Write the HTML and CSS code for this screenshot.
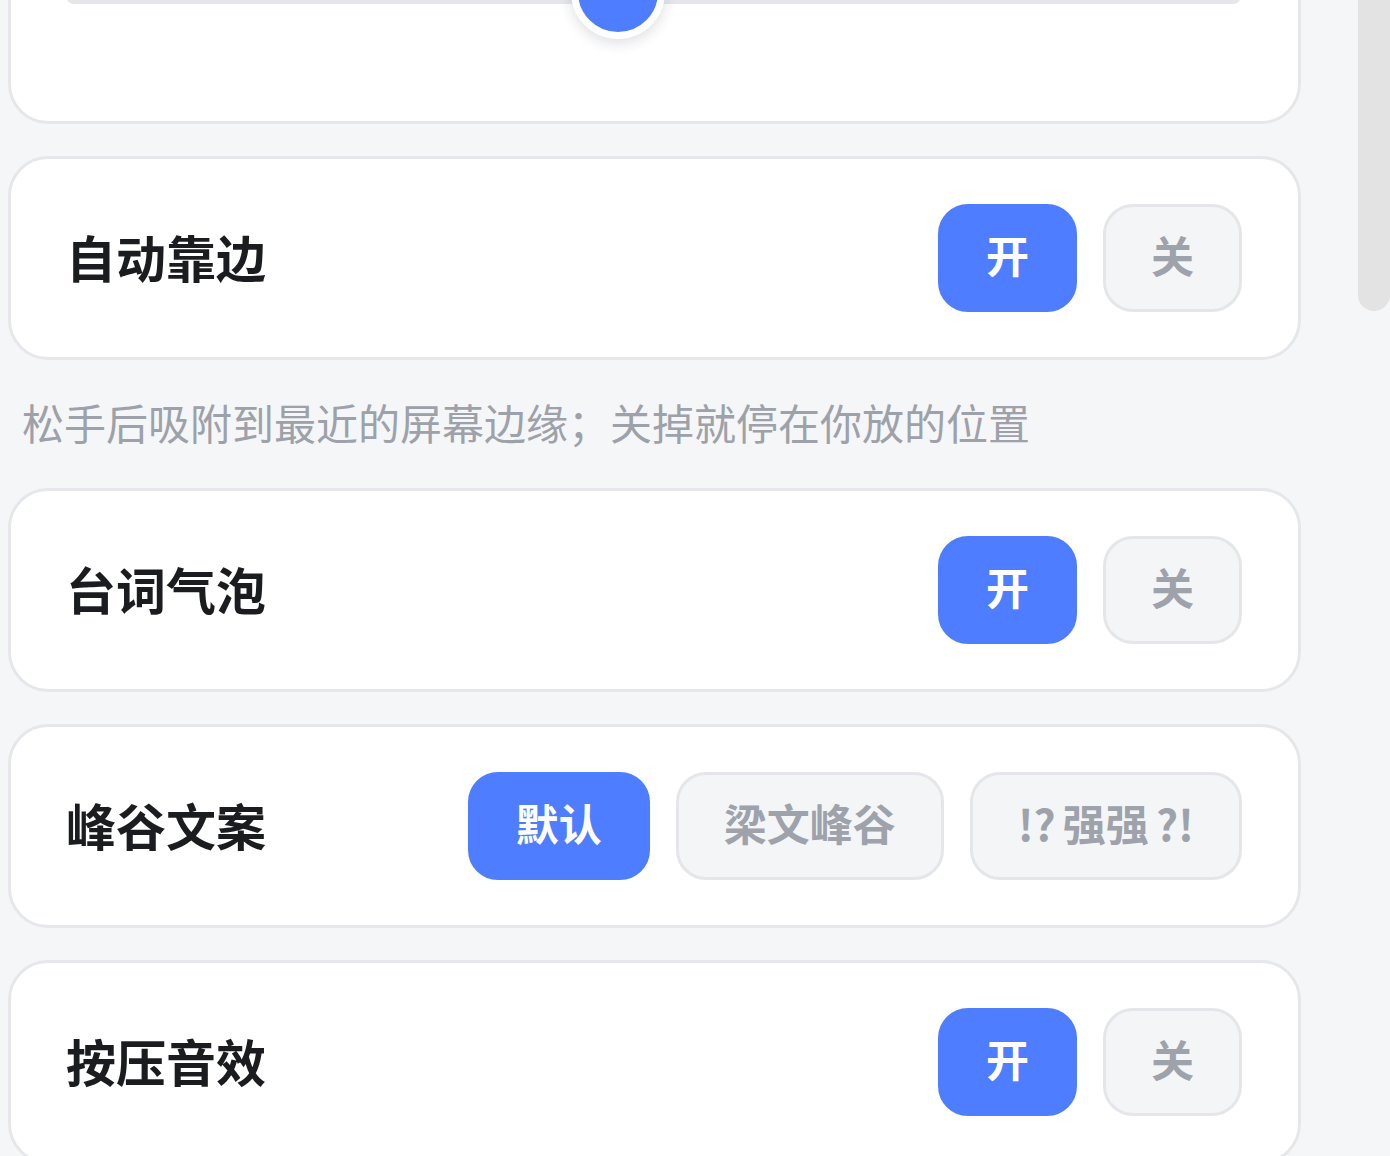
FILE: index.html
```html
<!DOCTYPE html>
<html lang="zh-CN">
<head>
<meta charset="utf-8">
<title>设置</title>
<link rel="stylesheet" href="styles.css">
</head>
<body>
<div class="page">
  <main class="content">
    <section class="card card-slider">
      <div class="track">
        <div class="knob" style="left: 47%"></div>
      </div>
    </section>

    <section class="card row">
      <h2 class="title">自动靠边</h2>
      <div class="options">
        <button class="opt active">开</button>
        <button class="opt">关</button>
      </div>
    </section>

    <p class="desc">松手后吸附到最近的屏幕边缘；关掉就停在你放的位置</p>

    <section class="card row">
      <h2 class="title">台词气泡</h2>
      <div class="options">
        <button class="opt active">开</button>
        <button class="opt">关</button>
      </div>
    </section>

    <section class="card row">
      <h2 class="title">峰谷文案</h2>
      <div class="options">
        <button class="opt active">默认</button>
        <button class="opt">梁文峰谷</button>
        <button class="opt">!?&#8198;强强&#8198;?!</button>
      </div>
    </section>

    <section class="card row">
      <h2 class="title">按压音效</h2>
      <div class="options">
        <button class="opt active">开</button>
        <button class="opt">关</button>
      </div>
    </section>
  </main>
  <aside class="scrollbar">
    <div class="thumb"></div>
  </aside>
</div>
</body>
</html>
```

FILE: styles.css
```css
html, body {
  margin: 0;
  padding: 0;
  height: 1156px;
  overflow: hidden;
  background: #f5f6f8;
}

body {
  font-family: "Noto Sans CJK SC", "Noto Sans", sans-serif;
  color: #1b1c20;
}

.page {
  display: flex;
  height: 1156px;
}

.content {
  flex: 1;
  display: flex;
  flex-direction: column;
  gap: 32px;
  padding: 0 57px 0 8px;
}

.card {
  background: #ffffff;
  border: 3px solid #e6e7eb;
  border-radius: 40px;
  flex-shrink: 0;
}

.card-slider {
  margin-top: -100px;
  padding: 85px 57px 117px 55px;
}

.track {
  position: relative;
  height: 16px;
  border-radius: 8px;
  background: #e6e7eb;
}

.knob {
  position: absolute;
  top: 50%;
  width: 80px;
  height: 80px;
  margin-left: -47px;
  margin-top: -51px;
  border-radius: 50%;
  background: #4f7dff;
  border: 7px solid #ffffff;
  box-shadow: 0 4px 14px rgba(20, 30, 60, 0.14);
}

.row {
  display: flex;
  align-items: center;
  justify-content: space-between;
  padding: 45px 56px 45px 55px;
}

.title {
  margin: 0;
  padding-bottom: 4px;
  font-size: 50px;
  font-weight: 700;
  line-height: 1;
  color: #1b1c20;
}

.options {
  display: flex;
  gap: 26px;
}

.opt {
  font-family: inherit;
  height: 108px;
  padding: 0 45px 8px;
  border-radius: 30px;
  border: 3px solid #e4e6ea;
  background: #f4f5f7;
  color: #9ea2ab;
  font-size: 43px;
  font-weight: 700;
  line-height: 1;
  cursor: pointer;
}

.opt.active {
  background: #4f7dff;
  border-color: #4f7dff;
  color: #ffffff;
}

.desc {
  margin: 0;
  padding: 0 0 4px 14px;
  font-size: 42px;
  line-height: 60px;
  color: #9da1a9;
  white-space: nowrap;
  flex-shrink: 0;
}

.scrollbar {
  width: 32px;
  flex-shrink: 0;
}

.thumb {
  margin-top: -20px;
  height: 331px;
  border-radius: 16px;
  background: #e3e3e3;
}
```
